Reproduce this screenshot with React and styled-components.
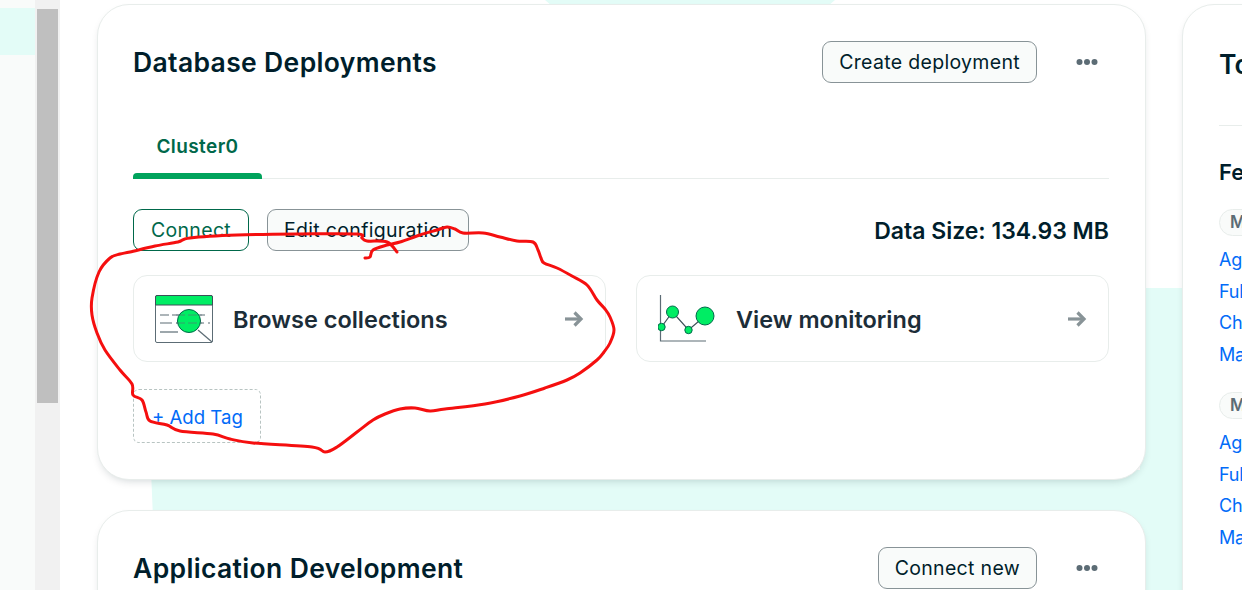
import React from "react";
import styled, { createGlobalStyle } from "styled-components";

const GlobalStyle = createGlobalStyle`
  html, body { margin: 0; padding: 0; background: #fff; }
  body { font-family: Inter, "Noto Sans", sans-serif; color: #001e2b; }
`;

const Page = styled.div`
  display: flex;
  width: 1242px;
  height: 590px;
  overflow: hidden;
  position: relative;
`;

const Sidebar = styled.aside`
  flex: 0 0 35px;
  padding-top: 8px;
  background: #f9fbfa;
`;

const SideActive = styled.div`
  height: 47px;
  background: #e3fcf7;
`;

const ScrollTrack = styled.div`
  flex: 0 0 25px;
  box-sizing: border-box;
  padding: 9px 2px 0;
  background: #f1f1f1;
`;

const ScrollThumb = styled.div`
  height: 394px;
  background: #bfbfbf;
`;

const Main = styled.main`
  flex: 1;
  position: relative;
  display: flex;
  gap: 36px;
  padding: 4px 0 0 37px;
  background: #fff;
`;

const Blob = styled.svg`
  position: absolute;
  left: 0;
  top: 0;
  width: 1182px;
  height: 590px;
`;

const Column = styled.div`
  flex: 0 0 1049px;
  display: flex;
  flex-direction: column;
  gap: 30px;
  position: relative;
`;

const Card = styled.section`
  box-sizing: border-box;
  flex: none;
  background: #fff;
  border: 1px solid #e8edeb;
  border-radius: 32px;
  padding: 36px 36px 36px 35px;
  box-shadow: 0 4px 10px -4px rgba(0, 30, 43, 0.22);
`;

const SideCard = styled(Card)`
  flex: 0 0 300px;
  height: 700px;
  position: relative;
  padding: 36px;
`;

const CardHead = styled.header`
  display: flex;
  align-items: center;
  height: 42px;
`;

const Title = styled.h2`
  flex: 1;
  margin: 0;
  font-size: 26.5px;
  line-height: 42px;
  font-weight: 600;
  letter-spacing: 0.35px;
  white-space: nowrap;
  color: #001e2b;
`;

const Button = styled.button`
  box-sizing: border-box;
  height: 42px;
  min-width: 116px;
  padding: 0 16px;
  border-radius: 9px;
  border: 1px solid ${(p) => (p.$primary ? "#00684a" : "#889397")};
  background: ${(p) => (p.$primary ? "#fff" : "#f9fbfa")};
  color: ${(p) => (p.$primary ? "#00684a" : "#001e2b")};
  font-family: inherit;
  font-size: 19.5px;
  letter-spacing: 0.32px;
  white-space: nowrap;
`;

const MoreButton = styled.div`
  display: flex;
  justify-content: flex-end;
  width: 61px;
  margin-right: 11px;
  color: #5c6c75;
`;

const TabBar = styled.nav`
  display: flex;
  align-items: flex-end;
  height: 96px;
  box-sizing: border-box;
  border-bottom: 1px solid #e8edeb;
`;

const Tab = styled.div`
  position: relative;
  box-sizing: border-box;
  width: 129px;
  height: 52px;
  padding-top: 9px;
  text-align: center;
  font-size: 19px;
  font-weight: 600;
  line-height: 24px;
  letter-spacing: 0.4px;
  color: #00684a;

  &::after {
    content: "";
    position: absolute;
    left: 0;
    right: 0;
    bottom: -1px;
    height: 6px;
    background: #00a35c;
    border-radius: 4px 4px 0 0;
  }
`;

const ActionRow = styled.div`
  display: flex;
  align-items: center;
  gap: 18px;
  margin-top: 30px;
  height: 42px;
`;

const DataSize = styled.div`
  margin-left: auto;
  padding-top: 2px;
  font-size: 23px;
  font-weight: 600;
  color: #001e2b;
`;

const LinkRow = styled.div`
  display: flex;
  gap: 30px;
  margin-top: 24px;
`;

const LinkCard = styled.a`
  box-sizing: border-box;
  flex: 1;
  display: flex;
  align-items: center;
  height: 87px;
  padding: 0 21px;
  border: 1px solid #e8edeb;
  border-radius: 14px;
  color: #1c2d38;
`;

const LinkLabel = styled.span`
  flex: 1;
  margin-left: 20px;
  padding-top: 2px;
  font-size: 23.5px;
  font-weight: 600;
`;

const AddTag = styled.div`
  box-sizing: border-box;
  width: 128px;
  height: 54px;
  margin-top: 27px;
  padding-left: 18px;
  border: 1px dashed #b8c4c2;
  border-radius: 6px;
  color: #016bf8;
  font-size: 18.6px;
  line-height: 55px;
`;

const SideTitle = styled.h2`
  margin: -4px 0 0;
  height: 88px;
  font-size: 26.5px;
  font-weight: 600;
  line-height: 54px;
  border-bottom: 1px solid #e8edeb;
  color: #001e2b;
`;

const SideSub = styled.h3`
  margin: 32px 0 23px;
  font-size: 22px;
  font-weight: 600;
  line-height: 28px;
  color: #001e2b;
`;

const Chip = styled.div`
  display: inline-block;
  box-sizing: border-box;
  height: 27px;
  padding: 0 10px;
  border: 1px solid #e8edeb;
  background: #f9fbfa;
  border-radius: 14px;
  color: #5c6c75;
  font-size: 17px;
  font-weight: 600;
  line-height: 25px;
  white-space: nowrap;
`;

const LinkList = styled.ul`
  list-style: none;
  margin: 8px 0 22px;
  padding: 0;
`;

const LinkItem = styled.li`
  height: 31.5px;
  font-size: 18px;
  line-height: 31px;
  letter-spacing: -0.2px;
  color: #016bf8;
  white-space: nowrap;
`;

const Scribble = styled.svg`
  position: absolute;
  left: 0;
  top: 0;
  width: 1242px;
  height: 590px;
  pointer-events: none;
`;

function ArrowIcon() {
  return (
    <svg width="20" height="16" viewBox="0 0 20 16" fill="none" stroke="#889397" strokeWidth="3.2">
      <path d="M1 8h16" />
      <path d="M10.5 1.5 17 8l-6.5 6.5" />
    </svg>
  );
}

function DotsIcon() {
  return (
    <svg width="22" height="8" viewBox="0 0 22 8" fill="currentColor">
      <circle cx="3.5" cy="4" r="3" />
      <circle cx="11" cy="4" r="3" />
      <circle cx="18.5" cy="4" r="3" />
    </svg>
  );
}

function BrowseIcon() {
  return (
    <svg width="58" height="48" viewBox="0 0 58 48" fill="none" stroke="#5c6c75" strokeWidth="1">
      <rect x="0.5" y="0.5" width="57" height="47" rx="1.5" fill="#fff" />
      <path d="M0.5 10V2A1.5 1.5 0 0 1 2 .5h54A1.5 1.5 0 0 1 57.5 2v8z" fill="#00ed64" stroke="#3d4f58" />
      <path d="M5 20h48" strokeDasharray="9 3" strokeWidth="1.2" />
      <path d="M5 28h50" strokeDasharray="12 4" strokeWidth="1.2" />
      <path d="M5 37h18" strokeWidth="1.2" />
      <circle cx="34" cy="26" r="11.5" fill="#00ed64" stroke="#00684a" />
      <path d="M21 20h26M21 28h26" strokeDasharray="9 3" strokeWidth="1" opacity="0.6" />
      <path d="M43 35l14 12" strokeWidth="1.2" />
    </svg>
  );
}

function MonitorIcon() {
  return (
    <svg width="58" height="48" viewBox="0 0 58 48" fill="none" stroke="#5c6c75" strokeWidth="1.2">
      <path d="M2.5 0v46H48" />
      <path d="M3.5 32L14.5 17 30.5 35 47 21" stroke="#3d4f58" />
      <g fill="#00ed64" stroke="#00684a" strokeWidth="1">
        <circle cx="3.5" cy="32" r="3.7" />
        <circle cx="14.5" cy="17" r="6" />
        <circle cx="30.5" cy="35" r="3.7" />
        <circle cx="47" cy="21" r="9" />
      </g>
    </svg>
  );
}

const scribblePoints = [
  [365,258],[370,257],[373,250],[387,245],[400,242],[420,235],[437,230],[447,227],[455,229],[463,233],[483,233],[500,237],[517,241],[533,242],
  [538,250],[541,258],[544,263],[557,268],[572,276],[587,285],[597,300],[605,309],[610,317],[614,330],[610,343],[604,352],[597,360],[580,373],[567,380],
  [545,388],[520,396],[485,404],[445,409],[430,411],[415,408],[400,409],[385,414],[373,420],[357,432],[337,447],[325,452],[312,447],
  [253,443],[230,439],[213,434],[180,431],[167,425],[150,421],[146,412],[142,400],[133,395],[132,384],[120,370],[105,350],[97,333],[92,315],[92,298],[99,272],
  [110,258],[120,254],[130,252],[155,246],[178,242],[190,238],[237,235],[300,234],[357,234],[362,238],[367,241],[387,242],[397,252],
];

// smooth the traced pen line with catmull-rom segments
function smoothPath(pts) {
  let d = `M${pts[0][0]} ${pts[0][1]}`;
  for (let i = 0; i < pts.length - 1; i++) {
    const p0 = pts[i - 1] || pts[i];
    const p1 = pts[i];
    const p2 = pts[i + 1];
    const p3 = pts[i + 2] || p2;
    const c1x = p1[0] + (p2[0] - p0[0]) / 6;
    const c1y = p1[1] + (p2[1] - p0[1]) / 6;
    const c2x = p2[0] - (p3[0] - p1[0]) / 6;
    const c2y = p2[1] - (p3[1] - p1[1]) / 6;
    d += `C${c1x} ${c1y} ${c2x} ${c2y} ${p2[0]} ${p2[1]}`;
  }
  return d;
}

export default function App() {
  return (
    <Page>
      <GlobalStyle />
      <Sidebar>
        <SideActive />
      </Sidebar>
      <ScrollTrack>
        <ScrollThumb />
      </ScrollTrack>
      <Main>
        {/* mint shape behind the cards */}
        <Blob viewBox="60 0 1182 590">
          <path d="M545 0 L552 6 H828 L835 0 Z" fill="#e3fcf7" />
          <path d="M1140 288 H1182 V590 H156 L151 470 H1140 Z" fill="#e3fcf7" />
        </Blob>
        <Column>
          <Card>
            <CardHead>
              <Title>Database Deployments</Title>
              <Button>Create deployment</Button>
              <MoreButton>
                <DotsIcon />
              </MoreButton>
            </CardHead>
            <TabBar>
              <Tab>Cluster0</Tab>
            </TabBar>
            <ActionRow>
              <Button $primary>Connect</Button>
              <Button>Edit configuration</Button>
              <DataSize>Data Size: 134.93 MB</DataSize>
            </ActionRow>
            <LinkRow>
              <LinkCard>
                <BrowseIcon />
                <LinkLabel>Browse collections</LinkLabel>
                <ArrowIcon />
              </LinkCard>
              <LinkCard>
                <MonitorIcon />
                <LinkLabel>View monitoring</LinkLabel>
                <ArrowIcon />
              </LinkCard>
            </LinkRow>
            <AddTag>+ Add Tag</AddTag>
          </Card>
          <Card>
            <CardHead>
              <Title>Application Development</Title>
              <Button>Connect new</Button>
              <MoreButton>
                <DotsIcon />
              </MoreButton>
            </CardHead>
          </Card>
        </Column>
        <SideCard>
          <SideTitle>Toolbox</SideTitle>
          <SideSub>Featured</SideSub>
          <Chip>MongoDB</Chip>
          <LinkList>
            <LinkItem>Aggregation</LinkItem>
            <LinkItem>Full-Text Search</LinkItem>
            <LinkItem>Charts</LinkItem>
            <LinkItem>Manage</LinkItem>
          </LinkList>
          <Chip>MongoDB</Chip>
          <LinkList>
            <LinkItem>Aggregation</LinkItem>
            <LinkItem>Full-Text Search</LinkItem>
            <LinkItem>Charts</LinkItem>
            <LinkItem>Manage</LinkItem>
          </LinkList>
        </SideCard>
      </Main>
      <Scribble viewBox="0 0 1242 590">
        <path d={smoothPath(scribblePoints)} fill="none" stroke="#f50f0f" strokeWidth="3" strokeLinejoin="round" strokeLinecap="round" />
      </Scribble>
    </Page>
  );
}
